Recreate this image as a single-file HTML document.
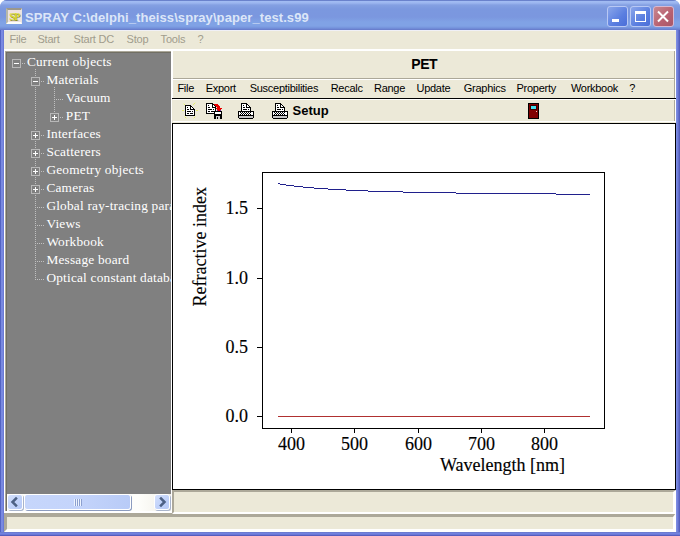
<!DOCTYPE html>
<html><head><meta charset="utf-8">
<style>
*{margin:0;padding:0;box-sizing:border-box}
html,body{width:680px;height:536px;overflow:hidden;background:#fff}
body{position:relative;font-family:"Liberation Sans",sans-serif}
.a{position:absolute}
.t{position:absolute;white-space:pre;line-height:1em}
.mm{font-size:11px;color:#a09c8c;letter-spacing:-0.2px}
.rm{font-size:11px;color:#000;letter-spacing:-0.27px}
.tr{font-family:"Liberation Serif",serif;font-size:13.33px;color:#fff;letter-spacing:0.2px}
.ser{font-family:"Liberation Serif",serif;font-size:18px;color:#000}
</style></head>
<body>
<!-- window frame -->
<div class="a" style="left:0;top:0;width:680px;height:536px;background:#7090e0;border-radius:7px 7px 0 0"></div>
<!-- title bar -->
<div class="a" style="left:0;top:0;width:680px;height:30px;border-radius:7px 7px 0 0;background:linear-gradient(#6a82cc 0px,#6a82cc 1px,#a3bdf3 1px,#9cb6ef 3px,#84a0e2 5px,#7b98df 9px,#7b97df 17px,#80a2e5 22px,#80a2e5 26px,#7492dc 28px,#6578c8 30px)"></div>
<div class="a" style="left:0;top:30px;width:4px;height:506px;background:linear-gradient(90deg,#5464c4 0px,#5464c4 1px,#7a8ae2 1px,#7888e0 3px,#6a7ad6 3px)"></div>
<div class="a" style="left:676px;top:30px;width:4px;height:506px;background:linear-gradient(90deg,#8090e4 0px,#7888e0 1px,#6a78d4 2px,#4c56b4 4px)"></div>
<div class="a" style="left:0;top:532px;width:680px;height:4px;background:linear-gradient(#6878c8 0px,#7282e0 1.5px,#6a78d6 2.5px,#4c50b4 4px)"></div>
<!-- app icon -->
<div class="a" style="left:6px;top:8px;width:16px;height:16px;background:#eee2e0;border-top:2px solid #9c988c;border-left:2px solid #b8b8a8;border-right:1px solid #e8e4e0;border-bottom:2px solid #fdfdf8"></div>
<div class="t" style="left:9.3px;top:11.6px;font-family:'Liberation Serif',serif;font-weight:bold;font-size:10.5px;color:#d8d838;letter-spacing:-1.2px;text-shadow:0.6px 0.6px 0 #8c8c20">SP</div>
<div class="t" style="left:25px;top:11px;font-size:13px;font-weight:bold;color:#dce6f8;letter-spacing:0.08px">SPRAY C:\delphi_theiss\spray\paper_test.s99</div>
<!-- caption buttons -->
<div class="a" style="left:607px;top:6px;width:21px;height:21px;border:1px solid #b8c8f4;border-radius:3px;background:linear-gradient(135deg,#8aa6ea,#5a7ee0 60%,#4a6ed8)"></div>
<div class="a" style="left:612px;top:19px;width:7px;height:3px;background:#fff"></div>
<div class="a" style="left:630px;top:6px;width:21px;height:21px;border:1px solid #b8c8f4;border-radius:3px;background:linear-gradient(135deg,#8aa6ea,#5a7ee0 60%,#4a6ed8)"></div>
<div class="a" style="left:635px;top:11px;width:11px;height:11px;border:1px solid #fff;border-top-width:3px"></div>
<div class="a" style="left:653px;top:6px;width:21px;height:21px;border:1px solid #d8b8d0;border-radius:3px;background:linear-gradient(135deg,#c88890,#b86070 60%,#a85868)"></div>
<svg class="a" style="left:653px;top:6px" width="21" height="21"><path d="M5 5.5 L15 15.5 M15 5.5 L5 15.5" stroke="#fff" stroke-width="2"/></svg>

<!-- main menu bar -->
<div class="a" style="left:4px;top:30px;width:672px;height:19px;background:#ece9d8;border-top:1px solid #f0f0f6"></div>
<div class="t mm" style="left:9.6px;top:33.7px">File</div>
<div class="t mm" style="left:37.4px;top:33.7px">Start</div>
<div class="t mm" style="left:73.5px;top:33.7px">Start DC</div>
<div class="t mm" style="left:126.6px;top:33.7px">Stop</div>
<div class="t mm" style="left:160.6px;top:33.7px">Tools</div>
<div class="t mm" style="left:197.6px;top:33.7px">?</div>

<!-- client area -->
<div class="a" style="left:4px;top:49px;width:672px;height:483px;background:#ece9d8"></div>
<div class="a" style="left:4px;top:49px;width:672px;height:2px;background:#fff"></div>

<!-- tree panel -->
<div class="a" style="left:4px;top:51px;width:168px;height:461px;background:#fff"></div>
<div class="a" style="left:5px;top:51px;width:166px;height:460px;background:#aca899"></div>
<div class="a" style="left:6px;top:52px;width:165px;height:459px;background:#716f64"></div>
<div class="a" style="left:7px;top:53px;width:164px;height:441px;background:#808080"></div>
<div id="tree"><div class="a" style="left:0;top:0;width:171px;height:494px;overflow:hidden"><svg class="a" style="left:0;top:0" width="171" height="494" shape-rendering="crispEdges"><path fill="#b8b8b8" d="M12 59h9v1h-9zM12 67h9v1h-9zM12 59h1v9h-1zM20 59h1v9h-1zM31 77h9v1h-9zM31 85h9v1h-9zM31 77h1v9h-1zM39 77h1v9h-1zM50 113h9v1h-9zM50 121h9v1h-9zM50 113h1v9h-1zM58 113h1v9h-1zM31 131h9v1h-9zM31 139h9v1h-9zM31 131h1v9h-1zM39 131h1v9h-1zM31 149h9v1h-9zM31 157h9v1h-9zM31 149h1v9h-1zM39 149h1v9h-1zM31 167h9v1h-9zM31 175h9v1h-9zM31 167h1v9h-1zM39 167h1v9h-1zM31 185h9v1h-9zM31 193h9v1h-9zM31 185h1v9h-1zM39 185h1v9h-1z"/><path fill="#fff" d="M14 63h5v1h-5zM33 81h5v1h-5zM52 117h5v1h-5zM54 115h1v5h-1zM33 135h5v1h-5zM35 133h1v5h-1zM33 153h5v1h-5zM35 151h1v5h-1zM33 171h5v1h-5zM35 169h1v5h-1zM33 189h5v1h-5zM35 187h1v5h-1z"/><path fill="#c0c0c0" d="M22 63h1v1h-1zM24 63h1v1h-1zM41 81h1v1h-1zM43 81h1v1h-1zM54 99h1v1h-1zM56 99h1v1h-1zM58 99h1v1h-1zM60 99h1v1h-1zM62 99h1v1h-1zM60 117h1v1h-1zM62 117h1v1h-1zM41 135h1v1h-1zM43 135h1v1h-1zM41 153h1v1h-1zM43 153h1v1h-1zM41 171h1v1h-1zM43 171h1v1h-1zM41 189h1v1h-1zM43 189h1v1h-1zM35 207h1v1h-1zM37 207h1v1h-1zM39 207h1v1h-1zM41 207h1v1h-1zM43 207h1v1h-1zM35 225h1v1h-1zM37 225h1v1h-1zM39 225h1v1h-1zM41 225h1v1h-1zM43 225h1v1h-1zM35 243h1v1h-1zM37 243h1v1h-1zM39 243h1v1h-1zM41 243h1v1h-1zM43 243h1v1h-1zM35 261h1v1h-1zM37 261h1v1h-1zM39 261h1v1h-1zM41 261h1v1h-1zM43 261h1v1h-1zM35 279h1v1h-1zM37 279h1v1h-1zM39 279h1v1h-1zM41 279h1v1h-1zM43 279h1v1h-1zM35 69h1v1h-1zM35 71h1v1h-1zM35 73h1v1h-1zM35 75h1v1h-1zM35 87h1v1h-1zM35 89h1v1h-1zM35 91h1v1h-1zM35 93h1v1h-1zM35 95h1v1h-1zM35 97h1v1h-1zM35 99h1v1h-1zM35 101h1v1h-1zM35 103h1v1h-1zM35 105h1v1h-1zM35 107h1v1h-1zM35 109h1v1h-1zM35 111h1v1h-1zM35 113h1v1h-1zM35 115h1v1h-1zM35 117h1v1h-1zM35 119h1v1h-1zM35 121h1v1h-1zM35 123h1v1h-1zM35 125h1v1h-1zM35 127h1v1h-1zM35 129h1v1h-1zM35 141h1v1h-1zM35 143h1v1h-1zM35 145h1v1h-1zM35 147h1v1h-1zM35 159h1v1h-1zM35 161h1v1h-1zM35 163h1v1h-1zM35 165h1v1h-1zM35 177h1v1h-1zM35 179h1v1h-1zM35 181h1v1h-1zM35 183h1v1h-1zM35 195h1v1h-1zM35 197h1v1h-1zM35 199h1v1h-1zM35 201h1v1h-1zM35 203h1v1h-1zM35 205h1v1h-1zM35 207h1v1h-1zM35 209h1v1h-1zM35 211h1v1h-1zM35 213h1v1h-1zM35 215h1v1h-1zM35 217h1v1h-1zM35 219h1v1h-1zM35 221h1v1h-1zM35 223h1v1h-1zM35 225h1v1h-1zM35 227h1v1h-1zM35 229h1v1h-1zM35 231h1v1h-1zM35 233h1v1h-1zM35 235h1v1h-1zM35 237h1v1h-1zM35 239h1v1h-1zM35 241h1v1h-1zM35 243h1v1h-1zM35 245h1v1h-1zM35 247h1v1h-1zM35 249h1v1h-1zM35 251h1v1h-1zM35 253h1v1h-1zM35 255h1v1h-1zM35 257h1v1h-1zM35 259h1v1h-1zM35 261h1v1h-1zM35 263h1v1h-1zM35 265h1v1h-1zM35 267h1v1h-1zM35 269h1v1h-1zM35 271h1v1h-1zM35 273h1v1h-1zM35 275h1v1h-1zM35 277h1v1h-1zM35 279h1v1h-1zM54 87h1v1h-1zM54 89h1v1h-1zM54 91h1v1h-1zM54 93h1v1h-1zM54 95h1v1h-1zM54 97h1v1h-1zM54 99h1v1h-1zM54 101h1v1h-1zM54 103h1v1h-1zM54 105h1v1h-1zM54 107h1v1h-1zM54 109h1v1h-1zM54 111h1v1h-1z"/></svg>
<div class="t tr" style="left:26.9px;top:54.83px">Current objects</div>
<div class="t tr" style="left:46.4px;top:72.83px">Materials</div>
<div class="t tr" style="left:65.8px;top:90.83px">Vacuum</div>
<div class="t tr" style="left:65.8px;top:108.83px">PET</div>
<div class="t tr" style="left:46.4px;top:126.83px">Interfaces</div>
<div class="t tr" style="left:46.4px;top:144.83px">Scatterers</div>
<div class="t tr" style="left:46.4px;top:162.83px">Geometry objects</div>
<div class="t tr" style="left:46.4px;top:180.83px">Cameras</div>
<div class="t tr" style="left:46.4px;top:198.83px">Global ray-tracing parameters</div>
<div class="t tr" style="left:46.4px;top:216.83px">Views</div>
<div class="t tr" style="left:46.4px;top:234.83px">Workbook</div>
<div class="t tr" style="left:46.4px;top:252.83px">Message board</div>
<div class="t tr" style="left:46.4px;top:270.83px">Optical constant database</div></div></div>

<!-- scrollbar -->
<div class="a" style="left:7px;top:494px;width:164px;height:17px;background:linear-gradient(90deg,#fdfdfa,#fefefb 80%,#f0eee6)"></div>
<div class="a" style="left:7px;top:494px;width:16px;height:16px;border:1px solid #fff;border-radius:3px;background:linear-gradient(135deg,#d4e0fc,#c2d3fa 50%,#b6c9f6);box-shadow:1px 1px 0 #a8b4cc"></div>
<svg class="a" style="left:7px;top:494px" width="16" height="16"><path d="M9 4.5L5.5 8L9 11.5" stroke="#4d6185" stroke-width="2.5" fill="none" stroke-linecap="square"/></svg>
<div class="a" style="left:24px;top:494px;width:107px;height:16px;border:1px solid #fff;border-radius:3px;background:linear-gradient(90deg,#c6d6fb,#c4d4fb 50%,#b8cbf7);box-shadow:1px 1px 0 #8c9cc0"></div>
<svg class="a" style="left:74px;top:499px" width="8" height="7" shape-rendering="crispEdges"><path fill="#eef4ff" d="M0 0h1v7h-1zM2 0h1v7h-1zM4 0h1v7h-1zM6 0h1v7h-1z"/><path fill="#8ca0d0" d="M1 0h1v7h-1zM3 0h1v7h-1zM5 0h1v7h-1zM7 0h1v7h-1z"/></svg>
<div class="a" style="left:154px;top:494px;width:16px;height:16px;border:1px solid #fff;border-radius:3px;background:linear-gradient(135deg,#d4e0fc,#c2d3fa 50%,#b6c9f6);box-shadow:1px 1px 0 #a8b4cc"></div>
<svg class="a" style="left:154px;top:494px" width="16" height="16"><path d="M7 4.5L10.5 8L7 11.5" stroke="#4d6185" stroke-width="2.5" fill="none" stroke-linecap="square"/></svg>

<!-- right panel: title -->
<div class="a" style="left:173px;top:51px;width:503px;height:27px;background:#ece9d8"></div>
<div class="a" style="left:173px;top:78px;width:503px;height:1px;background:#aca899"></div>
<div class="a" style="left:173px;top:79px;width:503px;height:1px;background:#fff"></div>
<div class="t" style="left:411.3px;top:57.1px;font-size:14px;font-weight:bold;color:#000;letter-spacing:-0.5px">PET</div>
<div class="a" style="left:674px;top:51px;width:1px;height:71px;background:#aca899"></div>
<div class="a" style="left:675px;top:49px;width:1px;height:73px;background:#fff"></div>
<div class="a" style="left:172px;top:51px;width:1px;height:47px;background:#fff"></div>
<div class="a" style="left:173px;top:121px;width:502px;height:1px;background:#fff"></div>
<div class="a" style="left:172px;top:98px;width:504px;height:1px;background:#000"></div>

<!-- right menu -->
<div class="t rm" style="left:177.4px;top:83.2px">File</div>
<div class="t rm" style="left:205.7px;top:83.2px">Export</div>
<div class="t rm" style="left:249.7px;top:83.2px">Susceptibilities</div>
<div class="t rm" style="left:330.7px;top:83.2px">Recalc</div>
<div class="t rm" style="left:374px;top:83.2px">Range</div>
<div class="t rm" style="left:416.5px;top:83.2px">Update</div>
<div class="t rm" style="left:463.8px;top:83.2px">Graphics</div>
<div class="t rm" style="left:516.5px;top:83.2px">Property</div>
<div class="t rm" style="left:570.9px;top:83.2px">Workbook</div>
<div class="t rm" style="left:629.3px;top:83.2px">?</div>
<div class="a" style="left:173px;top:99px;width:503px;height:1px;background:#fff"></div>

<!-- toolbar -->
<svg class="a" style="left:0;top:0" width="680" height="130" shape-rendering="crispEdges">
<path fill="#e4ec70" d="M184 104h1v1h-1zM193 104h1v1h-1zM194 103h1v1h-1zM183 110h1v1h-1zM196 110h1v1h-1zM185 117h1v1h-1zM194 117h1v1h-1zM182 110h1v1h-1zM197 110h1v1h-1z"/>
<path fill="#eef2b0" d="M183 103h1v1h-1zM195 102h1v1h-1zM186 118h1v1h-1zM193 118h1v1h-1zM184 116h1v1h-1zM195 116h1v1h-1z"/>
<path fill="#000" d="M185 105h6v1h1v1h1v1h1v1h1v7h-10z"/>
<path fill="#fff" d="M186 106h4v4h4v5h-8zM191 107h1v1h1v1h-2z"/>
<path fill="#000" d="M187 107h1v1h-1zM187 109h2v1h-2zM187 111h4v1h-4zM192 111h1v1h-1zM187 113h2v1h-2zM190 113h3v1h-3zM206 103h7v1h1v1h1v1h1v8h-10z"/>
<path fill="#fff" d="M207 104h5v4h3v5h-8zM213 105h1v1h1v1h-2z"/>
<path fill="#000" d="M208 105h1v1h-1zM208 107h2v1h-2zM208 109h4v1h-4zM213 109h1v1h-1zM208 111h2v1h-2zM211 111h3v1h-3z"/>
<path fill="#e80000" d="M214 104h4v1h-4zM215 105h4v1h-4zM216 106h4v1h-4zM217 107h3v1h-3zM216 108h6v1h-6zM217 109h4v1h-4zM218 110h2v1h-2z"/>
<path fill="#7030a0" d="M217 110h1v1h-1zM220 110h1v1h-1z"/>
<path fill="#000" d="M214 111h8v8h-8z"/>
<path fill="#fff" d="M215 112h6v2h-6z"/>
<path fill="#d0d0d0" d="M216 116h4v3h-4z"/>
<path fill="#000" d="M217 117h1v2h-1zM241 103h6v1h1v1h1v1h1v1h1v4h-10z"/>
<path fill="#fff" d="M242 104h4v4h4v3h-8zM247 105h1v1h1v1h-2z"/>
<path fill="#000" d="M243 105h1v1h-1zM243 107h2v1h-2zM243 109h4v1h-4zM248 109h1v1h-1zM238 111h16v7h-16zM239 118h14v1h-14z"/>
<path fill="#fff" d="M239 112h14v3h-14z"/>
<path fill="#000" d="M240 112h1v1h-1zM240 114h1v1h-1zM242 112h1v1h-1zM242 114h1v1h-1zM244 112h1v1h-1zM244 114h1v1h-1zM246 112h1v1h-1zM246 114h1v1h-1zM248 112h1v1h-1zM248 114h1v1h-1zM250 112h1v1h-1zM250 114h1v1h-1zM241 113h1v1h-1zM243 113h1v1h-1zM245 113h1v1h-1zM247 113h1v1h-1zM249 113h1v1h-1z"/>
<path fill="#c8c8c8" d="M239 116h14v2h-14z"/>
<path fill="#000" d="M275 103h6v1h1v1h1v1h1v1h1v4h-10z"/>
<path fill="#fff" d="M276 104h4v4h4v3h-8zM281 105h1v1h1v1h-2z"/>
<path fill="#000" d="M277 105h1v1h-1zM277 107h2v1h-2zM277 109h4v1h-4zM282 109h1v1h-1zM272 111h16v7h-16zM273 118h14v1h-14z"/>
<path fill="#fff" d="M273 112h14v3h-14z"/>
<path fill="#000" d="M274 112h1v1h-1zM274 114h1v1h-1zM276 112h1v1h-1zM276 114h1v1h-1zM278 112h1v1h-1zM278 114h1v1h-1zM280 112h1v1h-1zM280 114h1v1h-1zM282 112h1v1h-1zM282 114h1v1h-1zM284 112h1v1h-1zM284 114h1v1h-1zM275 113h1v1h-1zM277 113h1v1h-1zM279 113h1v1h-1zM281 113h1v1h-1zM283 113h1v1h-1z"/>
<path fill="#c8c8c8" d="M273 116h14v2h-14z"/>
<path fill="#000" d="M528 103h11v16h-11z"/>
<path fill="#800000" d="M529 104h9v14h-9z"/>
<path fill="#400000" d="M530 105h7v5h-7z"/>
<path fill="#40e0f0" d="M531 106h5v3h-5z"/>
<path fill="#f0c8b8" d="M536 111h1v1h-1z"/>
</svg>
<div class="t" style="left:292.5px;top:104.3px;font-size:13px;font-weight:bold;color:#000;letter-spacing:0px">Setup</div>

<!-- plot -->
<div class="a" style="left:172px;top:123px;width:504px;height:367px;background:#000"></div>
<div class="a" style="left:173px;top:124px;width:502px;height:365px;background:#fff"></div>
<svg class="a" style="left:0;top:0" width="680" height="536">
<g shape-rendering="crispEdges">
<path fill="#000" d="M262 172h343v1h-343zM262 428h343v1h-343zM262 172h1v257h-1zM604 172h1v257h-1zM257 208h5v1h-5zM257 278h5v1h-5zM257 347h5v1h-5zM257 416h5v1h-5zM291 429h1v4h-1zM354 429h1v4h-1zM418 429h1v4h-1zM481 429h1v4h-1zM544 429h1v4h-1z"/>
<path fill="#b03030" d="M278 416h312v1h-312z"/>
<path fill="#20208c" d="M278 183h2v1h-2zM280 184h6v1h-6zM286 185h8v1h-8zM294 186h9v1h-9zM303 187h11v1h-11zM314 188h14v1h-14zM328 189h18v1h-18zM346 190h22v1h-22zM368 191h35v1h-35zM403 192h53v1h-53zM456 193h100v1h-100zM556 194h34v1h-34z"/>
</g>
<g font-family="Liberation Serif" font-size="18" fill="#000" stroke="#000" stroke-width="0.15">
<text x="248" y="214" text-anchor="end">1.5</text>
<text x="248" y="284" text-anchor="end">1.0</text>
<text x="248" y="353" text-anchor="end">0.5</text>
<text x="248" y="422" text-anchor="end">0.0</text>
<text x="291.5" y="450" text-anchor="middle">400</text>
<text x="354.5" y="450" text-anchor="middle">500</text>
<text x="418.5" y="450" text-anchor="middle">600</text>
<text x="481.5" y="450" text-anchor="middle">700</text>
<text x="544.5" y="450" text-anchor="middle">800</text>
<text x="440" y="471">Wavelength [nm]</text>
<text transform="translate(205.8 306.4) rotate(-90)">Refractive index</text>
</g></svg>

<!-- status bar -->
<div class="a" style="left:4px;top:511px;width:168px;height:2px;background:#fff"></div>
<div class="a" style="left:4px;top:513px;width:672px;height:19px;background:#ece9d8;border-top:4px solid #aca899;border-left:3px solid #aca899;border-right:3px solid #fff;border-bottom:3px solid #fff"></div>
<div class="a" style="left:172px;top:490px;width:504px;height:24px;background:#ece9d8;border-top:2px solid #aca899;border-left:2px solid #aca899;border-right:3px solid #fff;border-bottom:2px solid #fff"></div>
</body></html>
